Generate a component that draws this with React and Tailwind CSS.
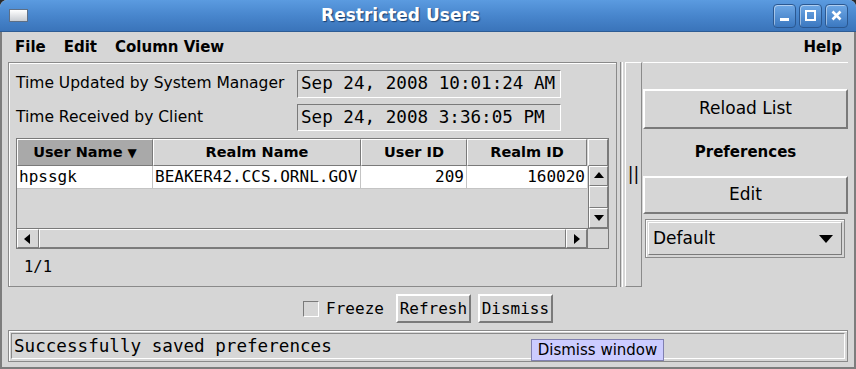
import React from 'react';

const SANS = { fontFamily: '"DejaVu Sans", Verdana, sans-serif' };
const MONO = { fontFamily: '"DejaVu Sans Mono", "Liberation Mono", monospace' };

function TitleButton({ children }) {
  return (
    <div className="w-[23px] h-[24px] rounded-[4px] border border-[#2b5891] bg-gradient-to-b from-[#6ea8e6] to-[#3b78c0] shadow-[inset_1px_1px_0_rgba(255,255,255,0.45)] flex items-center justify-center">
      {children}
    </div>
  );
}

function Arrow({ dir }) {
  const pts = {
    up: '1,8 6,2 11,8',
    down: '1,3 6,9 11,3',
    left: '8,1 2,6 8,11',
    right: '3,1 9,6 3,11',
  }[dir];
  return (
    <svg width="12" height="12" viewBox="0 0 12 12">
      <polygon points={pts} fill="#000" />
    </svg>
  );
}

function ScrollBtn({ dir, className = '' }) {
  return (
    <div className={`flex items-center justify-center bg-[#d6d6d6] border border-t-white border-l-white border-b-[#7c7c7c] border-r-[#7c7c7c] ${className}`}>
      <Arrow dir={dir} />
    </div>
  );
}

function RaisedButton({ children, className = '' }) {
  return (
    <div className={`flex items-center justify-center bg-[#d6d6d6] border-2 border-t-white border-l-white border-b-[#7a7a7a] border-r-[#7a7a7a] ${className}`}>
      {children}
    </div>
  );
}

export default function App() {
  const columns = [
    { name: 'User Name', w: 'w-[136px]', selected: true },
    { name: 'Realm Name', w: 'w-[208px]' },
    { name: 'User ID', w: 'w-[106px]' },
    { name: 'Realm ID', w: 'w-[120px]' },
  ];

  return (
    <div className="w-[856px] h-[369px] bg-[#2a2a2a] overflow-hidden">
      <div className="relative h-full flex flex-col rounded-t-[7px] overflow-hidden bg-[#d6d6d6] text-black" style={SANS}>
        {/* title bar */}
        <div className="h-[32px] flex items-center bg-gradient-to-b from-[#5b9be0] via-[#4886cd] to-[#3a74ba] border-b border-[#2d5c94] pl-[9px] pr-[8px]">
          <div className="w-[19px] h-[13px] border border-[#5d6f86] bg-gradient-to-b from-white to-[#c8ccd2]" />
          <div className="flex-1 text-center text-white font-bold text-[17px] [text-shadow:1px_1px_1px_#1b3f6e]">
            Restricted Users
          </div>
          <div className="flex gap-[3px]">
            <TitleButton>
              <svg width="13" height="13" viewBox="0 0 13 13"><rect x="2" y="9" width="9" height="3" fill="#fff" /></svg>
            </TitleButton>
            <TitleButton>
              <svg width="13" height="13" viewBox="0 0 13 13"><rect x="2" y="2" width="9" height="9" fill="none" stroke="#fff" strokeWidth="2" /></svg>
            </TitleButton>
            <TitleButton>
              <svg width="13" height="13" viewBox="0 0 13 13"><path d="M2.5 2.5 L10.5 10.5 M10.5 2.5 L2.5 10.5" stroke="#fff" strokeWidth="2.6" /></svg>
            </TitleButton>
          </div>
        </div>

        {/* window body */}
        <div className="flex-1 flex flex-col border-l-2 border-r-2 border-b-2 border-[#7d7d7d]">
          {/* menu bar */}
          <div className="h-[30px] flex items-center gap-[18px] pl-[13px] pr-[12px] text-[15px] font-bold">
            <span>File</span>
            <span>Edit</span>
            <span>Column View</span>
            <span className="ml-auto">Help</span>
          </div>

          {/* main area */}
          <div className="h-[225px] flex pl-[6px] pr-[6px]">
            {/* left panel */}
            <div className="w-[609px] h-full border border-[#8a8a8a] shadow-[inset_1px_1px_0_#fff] flex flex-col pl-[7px] pt-[7px]">
              <div className="flex items-center h-[28px]">
                <span className="w-[281px] text-[15.5px]">Time Updated by System Manager</span>
                <div className="w-[264px] h-full border border-t-[#7a7a7a] border-l-[#7a7a7a] border-b-white border-r-white flex items-center pl-[3px] text-[17.6px] leading-none" style={MONO}>
                  Sep 24, 2008 10:01:24 AM
                </div>
              </div>
              <div className="flex items-center h-[27px] mt-[6px]">
                <span className="w-[281px] text-[15.5px]">Time Received by Client</span>
                <div className="w-[264px] h-full border border-t-[#7a7a7a] border-l-[#7a7a7a] border-b-white border-r-white flex items-center pl-[3px] text-[17.6px] leading-none" style={MONO}>
                  Sep 24, 2008 3:36:05 PM
                </div>
              </div>

              {/* table scroll pane */}
              <div className="w-[593px] mt-[7px] border border-[#7a7a7a] flex flex-col">
                <div className="flex h-[27px]">
                  {columns.map((c) => (
                    <div
                      key={c.name}
                      className={`${c.w} h-full flex items-center justify-center text-[14.5px] font-bold border border-t-white border-l-white border-b-[#7a7a7a] border-r-[#7a7a7a] ${c.selected ? 'bg-[#a9a9a9]' : 'bg-[#d6d6d6]'}`}
                    >
                      {c.name}
                      {c.selected && <span className="ml-[5px] text-[12px]">▼</span>}
                    </div>
                  ))}
                  <div className="w-[1px]" />
                  <div className="w-[20px] border border-t-white border-l-white border-b-[#7a7a7a] border-r-[#7a7a7a]" />
                </div>
                <div className="flex h-[62px]">
                  <div className="flex-1 flex flex-col">
                    <div className="flex h-[23px] text-[16px]" style={MONO}>
                      <div className="w-[136px] bg-white border-r border-b border-[#c4c4c4] pl-[2px] flex items-center">hpssgk</div>
                      <div className="w-[208px] bg-white border-r border-b border-[#c4c4c4] pl-[2px] flex items-center">BEAKER42.CCS.ORNL.GOV</div>
                      <div className="w-[106px] bg-white border-r border-b border-[#c4c4c4] pr-[2px] flex items-center justify-end">209</div>
                      <div className="w-[120px] bg-white border-b border-[#c4c4c4] pr-[2px] flex items-center justify-end">160020</div>
                    </div>
                  </div>
                  <div className="w-[20px] flex flex-col border-l border-[#7a7a7a]">
                    <ScrollBtn dir="up" className="h-[20px]" />
                    <div className="flex-1 border border-t-white border-l-white border-b-[#7c7c7c] border-r-[#7c7c7c]" />
                    <ScrollBtn dir="down" className="h-[20px]" />
                  </div>
                </div>
                <div className="flex h-[20px] border-t border-[#7a7a7a]">
                  <ScrollBtn dir="left" className="w-[22px]" />
                  <div className="flex-1 border border-t-white border-l-white border-b-[#7c7c7c] border-r-[#7c7c7c]" />
                  <ScrollBtn dir="right" className="w-[21px]" />
                  <div className="w-[21px] border-l border-[#7a7a7a]" />
                </div>
              </div>

              <div className="flex-1 flex items-center pl-[8px] text-[15.5px]" style={MONO}>
                1/1
              </div>
            </div>

            {/* splitter */}
            <div className="w-[26px] h-full flex pl-[3px]">
              <div className="w-[3px] h-full border-l border-[#8a8a8a] border-r border-r-white" />
              <div className="w-[17px] h-full ml-[2px] border border-t-white border-l-white border-b-[#8a8a8a] border-r-[#8a8a8a] flex items-center justify-center text-[17px]">
                ||
              </div>
            </div>

            {/* right panel */}
            <div className="flex-1 h-full flex flex-col pt-[26px] border-t border-white">
              <RaisedButton className="h-[40px] text-[17px]">Reload List</RaisedButton>
              <div className="h-[47px] flex items-center justify-center text-[15px] font-bold">Preferences</div>
              <RaisedButton className="h-[38px] text-[17px]">Edit</RaisedButton>
              <div className="mt-[5px] mx-[2px] mr-[3px] h-[39px] border border-[#8a8a8a] shadow-[inset_1px_1px_0_#fff] p-[2px]">
                <div className="h-full border border-t-white border-l-white border-b-[#7a7a7a] border-r-[#7a7a7a] flex items-center pl-[4px] pr-[8px] text-[17px]">
                  <span>Default</span>
                  <svg className="ml-auto" width="14" height="8" viewBox="0 0 14 8"><polygon points="0,0 14,0 7,8" fill="#000" /></svg>
                </div>
              </div>
            </div>
          </div>

          {/* buttons row */}
          <div className="h-[43px] flex items-center justify-center text-[16px]" style={MONO}>
            <div className="w-[16px] h-[16px] border border-t-[#7a7a7a] border-l-[#7a7a7a] border-b-white border-r-white" />
            <span className="ml-[7px]">Freeze</span>
            <RaisedButton className="ml-[12px] w-[75px] h-[29px] border">Refresh</RaisedButton>
            <RaisedButton className="ml-[7px] w-[75px] h-[29px] border">Dismiss</RaisedButton>
          </div>

          {/* status bar */}
          <div className="mx-[6px] h-[32px] border border-[#8a8a8a] shadow-[inset_1px_1px_0_#fff] p-[2px]">
            <div className="h-full border border-t-[#8a8a8a] border-l-[#8a8a8a] border-b-white border-r-white flex items-center pl-[2px] text-[17.6px]" style={MONO}>
              Successfully saved preferences
            </div>
          </div>
        </div>

        {/* tooltip */}
        <div className="absolute left-[531px] top-[339px] w-[133px] h-[22px] bg-[#ccccff] border border-[#8080b0] flex items-center justify-center text-[15px]">
          Dismiss window
        </div>
      </div>
    </div>
  );
}
